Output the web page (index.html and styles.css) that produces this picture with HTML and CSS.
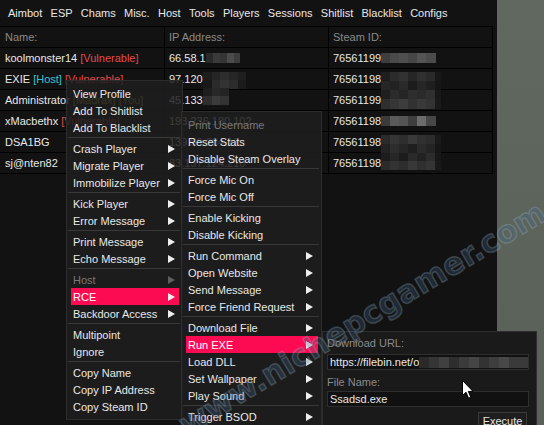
FILE: index.html
```html
<!DOCTYPE html>
<html>
<head>
<meta charset="utf-8">
<title>Players</title>
<link rel="stylesheet" href="styles.css">
</head>
<body>
<div class="desk">
  <div class="win">
    <nav class="menubar">
      <span>Aimbot</span><span>ESP</span><span>Chams</span><span>Misc.</span><span>Host</span><span>Tools</span><span>Players</span><span>Sessions</span><span>Shitlist</span><span>Blacklist</span><span>Configs</span>
    </nav>
    <div class="table">
      <div class="row head">
        <div class="cell c1">Name:</div><div class="cell">IP Address:</div><div class="cell">Steam ID:</div>
      </div>
      <div class="row">
        <div class="cell c1">koolmonster14&nbsp;<span class="vuln">[Vulnerable]</span></div>
        <div class="cell">66.58.1<span class="mos ip1"></span></div>
        <div class="cell">76561199<span class="mos s1"></span></div>
      </div>
      <div class="row">
        <div class="cell c1">EXIE&nbsp;<span class="host">[Host]</span>&nbsp;<span class="vuln">[Vulnerable]</span></div>
        <div class="cell">97.120<span class="mos ip2"></span></div>
        <div class="cell">76561198<span class="mos s2"></span></div>
      </div>
      <div class="row">
        <div class="cell c1">Administrator&nbsp;<span class="you">[Madrax] [You]</span></div>
        <div class="cell">45.133<span class="mos ip3"></span></div>
        <div class="cell">76561199</div>
      </div>
      <div class="row">
        <div class="cell c1">xMacbethx&nbsp;<span class="vuln">[Vulnerable]</span></div>
        <div class="cell">193.236.180.102</div>
        <div class="cell">76561198<span class="mos s4"></span></div>
      </div>
      <div class="row">
        <div class="cell c1">DSA1BG</div>
        <div class="cell">139.59.204.17</div>
        <div class="cell">76561198<span class="mos s5"></span></div>
      </div>
      <div class="row">
        <div class="cell c1">sj@nten82</div>
        <div class="cell">83.137.124.210</div>
        <div class="cell">76561198</div>
      </div>
    </div>
  </div>

  <div class="menu menu-main">
    <div class="item">View Profile</div>
    <div class="item">Add To Shitlist</div>
    <div class="item">Add To Blacklist</div>
    <div class="sep"></div>
    <div class="item">Crash Player<i class="arr"></i></div>
    <div class="item">Migrate Player<i class="arr"></i></div>
    <div class="item">Immobilize Player<i class="arr"></i></div>
    <div class="sep"></div>
    <div class="item">Kick Player<i class="arr"></i></div>
    <div class="item">Error Message<i class="arr"></i></div>
    <div class="sep"></div>
    <div class="item">Print Message<i class="arr"></i></div>
    <div class="item">Echo Message<i class="arr"></i></div>
    <div class="sep"></div>
    <div class="item disabled">Host<i class="arr"></i></div>
    <div class="item active">RCE<i class="arr"></i></div>
    <div class="item">Backdoor Access<i class="arr"></i></div>
    <div class="sep"></div>
    <div class="item">Multipoint</div>
    <div class="item">Ignore</div>
    <div class="sep"></div>
    <div class="item">Copy Name</div>
    <div class="item">Copy IP Address</div>
    <div class="item">Copy Steam ID</div>
  </div>

  <div class="menu menu-sub">
    <div class="item disabled">Print Username</div>
    <div class="item">Reset Stats</div>
    <div class="item">Disable Steam Overlay</div>
    <div class="sep"></div>
    <div class="item">Force Mic On</div>
    <div class="item">Force Mic Off</div>
    <div class="sep"></div>
    <div class="item">Enable Kicking</div>
    <div class="item">Disable Kicking</div>
    <div class="sep"></div>
    <div class="item">Run Command<i class="arr"></i></div>
    <div class="item">Open Website<i class="arr"></i></div>
    <div class="item">Send Message<i class="arr"></i></div>
    <div class="item">Force Friend Request<i class="arr"></i></div>
    <div class="sep"></div>
    <div class="item">Download File<i class="arr"></i></div>
    <div class="item active">Run EXE<i class="arr"></i></div>
    <div class="item">Load DLL<i class="arr"></i></div>
    <div class="item">Set Wallpaper<i class="arr"></i></div>
    <div class="item">Play Sound<i class="arr"></i></div>
    <div class="sep"></div>
    <div class="item">Trigger BSOD<i class="arr"></i></div>
  </div>

  <div class="panel">
    <div class="lbl">Download URL:</div>
    <div class="input">https://filebin.net/o<span class="mos url"></span></div>
    <div class="lbl lbl2">File Name:</div>
    <div class="input">Ssadsd.exe</div>
    <div class="actions"><span class="btn">Execute</span></div>
  </div>

  <div class="watermark">www.nichepcgamer.com</div>

  <svg class="cursor" width="13" height="19" viewBox="0 0 13 19">
    <path d="M0.5 0.5 L0.5 15.5 L4 12.2 L6.6 18.2 L8.8 17.2 L6.3 11.4 L11 11.4 Z" fill="#fff" stroke="#000" stroke-width="1"/>
  </svg>
</div>
</body>
</html>
```

FILE: styles.css
```css
* { box-sizing: border-box; }
html, body { margin: 0; padding: 0; }
body {
  background: #5c645c;
  font-family: "Liberation Sans", Arial, sans-serif;
  font-size: 11px;
  color: #e6e6e6;
  overflow: hidden;
}
.desk {
  position: relative;
  width: 544px;
  height: 425px;
  overflow: hidden;
  background: linear-gradient(180deg, #606860 0%, #5b635b 60%, #596159 100%);
}
.win {
  width: 497px;
  height: 425px;
  background: #121212;
}
.menubar {
  height: 26px;
  display: flex;
  align-items: center;
  gap: 8.3px;
  padding-left: 8px;
  color: #e8e8e8;
  white-space: nowrap;
}
.table {
  width: 493px;
  border-top: 1px solid #000;
}
.row {
  display: grid;
  grid-template-columns: 165px 164px 164px;
  grid-template-rows: 20px;
  height: 21px;
  border-bottom: 1px solid #000;
}
.cell {
  display: flex;
  align-items: center;
  height: 20px;
  padding-left: 4px;
  border-right: 1px solid #000;
  white-space: nowrap;
  color: #e8e8e8;
  min-width: 0;
}
.cell.c1 { padding-left: 5px; }
.row.head .cell { color: #8a8a8a; }
.vuln { color: #e24a4a; }
.host { color: #36c4cc; }
.you { color: #b8b840; }

.mos { display: inline-block; position: relative; z-index: 1; flex: none; }
.ip1 {
  width: 34px; height: 10px;
  background: linear-gradient(90deg, #2a2a2a 0 7px, #3a3a3a 7px 14px, #353535 14px 21px, #4b4b4b 21px 28px, #3d3d3d 28px);
}
.ip2 {
  width: 43px; height: 17px; align-self: flex-start; margin-top: 3px;
  background:
    linear-gradient(90deg, #1d1d1d 0 9px, #252525 9px 17px, #2d2d2d 17px 26px, #262626 26px 35px, #1f1f1f 35px) 0 0 / 100% 8px no-repeat,
    linear-gradient(90deg, #181818 0 9px, #2b2b2b 9px 17px, #333 17px 26px, #2c2c2c 26px 35px, #1b1b1b 35px) 0 8px / 100% 9px no-repeat;
}
.ip3 {
  width: 26px; height: 17px; align-self: flex-start; margin-top: -2px;
  background:
    linear-gradient(90deg, #1e1e1e 0 9px, #282828 9px 17px, #242424 17px) 0 0 / 100% 8px no-repeat,
    linear-gradient(90deg, #2e2e2e 0 9px, #3b3b3b 9px 17px, #343434 17px) 0 8px / 100% 9px no-repeat;
}
.s1 {
  width: 55px; height: 10px;
  background: linear-gradient(90deg, #3e3e3e 0 9px, #4a4a4a 9px 18px, #4f4f4f 18px 27px, #474747 27px 36px, #545454 36px 45px, #4c4c4c 45px);
}
.s2 {
  width: 60px; height: 37px; align-self: flex-start; margin-top: 3px;
  background:
    linear-gradient(90deg, #1e1e1e 0 9px, #2c2c2c 9px 18px, #323232 18px 27px, #262626 27px 36px, #303030 36px 45px, #2a2a2a 45px 54px, #181818 54px) 0 0 / 100% 9px no-repeat,
    linear-gradient(90deg, #262626 0 9px, #222 9px 18px, #2a2a2a 18px 27px, #1c1c1c 27px 36px, #262626 36px 45px, #1f1f1f 45px 54px, #161616 54px) 0 9px / 100% 9px no-repeat,
    linear-gradient(90deg, #1f1f1f 0 9px, #2b2b2b 9px 18px, #252525 18px 27px, #2e2e2e 27px 36px, #2a2a2a 36px 45px, #303030 45px 54px, #181818 54px) 0 18px / 100% 9px no-repeat,
    linear-gradient(90deg, #2f2f2f 0 9px, #363636 9px 18px, #3d3d3d 18px 27px, #323232 27px 36px, #393939 36px 45px, #333 45px 54px, #1a1a1a 54px) 0 27px / 100% 10px no-repeat;
}
.s4 {
  width: 55px; height: 10px;
  background: linear-gradient(90deg, #3b3b3b 0 9px, #5a5a5a 9px 18px, #555 18px 27px, #3f3f3f 27px 36px, #6c6c6c 36px 45px, #474747 45px);
}
.s5 {
  width: 60px; height: 35px; align-self: flex-start; margin-top: 3px;
  background:
    linear-gradient(90deg, #2a2a2a 0 9px, #353535 9px 18px, #2e2e2e 18px 27px, #393939 27px 36px, #303030 36px 45px, #2c2c2c 45px 54px, #1a1a1a 54px) 0 0 / 100% 9px no-repeat,
    linear-gradient(90deg, #222 0 9px, #2d2d2d 9px 18px, #262626 18px 27px, #1f1f1f 27px 36px, #2b2b2b 36px 45px, #242424 45px 54px, #161616 54px) 0 9px / 100% 9px no-repeat,
    linear-gradient(90deg, #1d1d1d 0 9px, #262626 9px 18px, #1c1c1c 18px 27px, #2a2a2a 27px 36px, #222 36px 45px, #2c2c2c 45px 54px, #181818 54px) 0 18px / 100% 8px no-repeat,
    linear-gradient(90deg, #2b2b2b 0 9px, #333 9px 18px, #2e2e2e 18px 27px, #383838 27px 36px, #2f2f2f 36px 45px, #353535 45px 54px, #1a1a1a 54px) 0 26px / 100% 9px no-repeat;
}

.menu {
  position: absolute;
  background: rgba(30, 30, 30, 0.86);
  border: 1px solid #2c2c2c;
  padding: 4px 0;
  color: #e8e8e8;
  z-index: 5;
}
.menu-main { left: 66px; top: 80px; width: 117px; }
.menu-sub { left: 181px; top: 111px; width: 141px; z-index: 6; }
.item {
  height: 17px;
  display: flex;
  align-items: center;
  justify-content: space-between;
  margin: 0 3px 0 4px;
  padding: 0 4px 0 2px;
  white-space: nowrap;
}
.menu-sub .item { padding-right: 5px; }
.item.disabled { color: #787878; }
.item.active { background: #fc0b52; color: #fff; }
.arr {
  width: 0; height: 0;
  border-left: 7px solid #eeeeee;
  border-top: 4px solid transparent;
  border-bottom: 4px solid transparent;
}
.item.disabled .arr { border-left-color: #5e5e5e; }
.sep {
  height: 1px;
  background: #383838;
  margin: 1px 2px 2px 1px;
}

.panel {
  position: absolute;
  left: 322px;
  top: 331px;
  width: 215px;
  height: 110px;
  background: #1a1a1a;
  border: 1px solid #2e2e2e;
  padding: 4px 7px 0 4px;
  z-index: 4;
}
.lbl { height: 14px; line-height: 14px; color: #8a8a8a; margin-bottom: 4px; }
.lbl2 { margin-top: 5px; margin-bottom: 2px; }
.input {
  height: 16px;
  display: flex;
  align-items: center;
  background: #111;
  border: 1px solid #2e2e2e;
  padding-left: 2px;
  color: #e8e8e8;
  white-space: nowrap;
  overflow: hidden;
}
.url {
  width: 110px; height: 11px;
  background: linear-gradient(90deg, #2a2a2a 0 10px, #353535 10px 20px, #404040 20px 30px, #2e2e2e 30px 40px, #3b3b3b 40px 50px, #454545 50px 60px, #333 60px 70px, #3e3e3e 70px 80px, #484848 80px 90px, #3a3a3a 90px);
}
.actions { display: flex; justify-content: flex-end; margin-top: 5px; padding-right: 2px; }
.btn {
  width: 49px;
  height: 18px;
  line-height: 16px;
  text-align: center;
  background: #1e1e1e;
  border: 1px solid #3a3a3a;
  color: #e8e8e8;
}

.watermark {
  position: absolute;
  left: 362px;
  top: 318px;
  transform: translate(-50%, -50%) rotate(-31deg);
  font-family: "DejaVu Sans", "Liberation Sans", sans-serif;
  font-weight: bold;
  font-size: 31px;
  white-space: nowrap;
  color: rgba(70, 105, 140, 0.3);
  -webkit-text-stroke: 1.5px rgba(175, 200, 220, 0.24);
  pointer-events: none;
  z-index: 8;
}
.cursor {
  position: absolute;
  left: 462px;
  top: 380px;
  z-index: 9;
}
```
